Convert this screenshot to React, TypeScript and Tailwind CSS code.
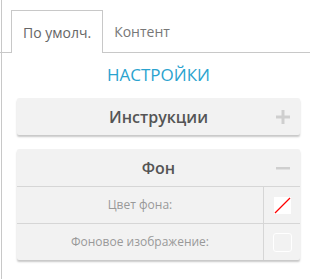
const font = { fontFamily: '"Open Sans", "Noto Sans", sans-serif' };

const Plus = () => (
  <svg width="14" height="14" viewBox="0 0 14 14" className="block">
    <rect x="5.5" y="0" width="3" height="14" fill="#cfcfcf" />
    <rect x="0" y="5.5" width="14" height="3" fill="#cfcfcf" />
  </svg>
);

const Minus = () => (
  <svg width="14" height="14" viewBox="0 0 14 14" className="block">
    <rect x="0" y="6" width="14" height="2.5" fill="#cfcfcf" />
  </svg>
);

const PanelHeader = ({ title, open }: { title: string; open: boolean }) => (
  <div className="relative h-[37px] flex items-center justify-center">
    <span className="text-[16px] font-semibold text-[#555]">{title}</span>
    <span className="absolute right-[10px] top-1/2 -translate-y-1/2">
      {open ? <Minus /> : <Plus />}
    </span>
  </div>
);

const Row = ({ label, children }: { label: string; children: React.ReactNode }) => (
  <div className="flex h-[37px] border-t border-[#d6d6d6]">
    <div className="flex-1 flex items-center justify-center text-[12px] text-[#999]">{label}</div>
    <div className="w-[37px] border-l border-[#d6d6d6] flex items-center justify-center">{children}</div>
  </div>
);

export default function App() {
  return (
    <div className="h-[279px] w-[322px] bg-white overflow-hidden" style={font}>
      <div className="relative w-[310px] h-full">
        <div className="absolute left-px top-0 bottom-0 w-px bg-[#c8c8c8]" />
        {/* tabs */}
        <div className="flex h-[53px] pt-[10px] pl-[11px] border-b border-[#c8c8c8]">
          <div className="h-[43px] -mb-px border border-b-0 border-[#c8c8c8] bg-white px-[11px] flex items-center text-[14px] text-[#666] relative">
            По умолч.
          </div>
          <div className="h-[43px] px-[11px] flex items-center text-[14px] text-[#777]">Контент</div>
        </div>

        <div className="pl-[17px] pr-[10px]">
          <div className="text-center text-[17px] text-[#2aa3cf] pt-[11px] leading-[22px]">НАСТРОЙКИ</div>

          <div className="mt-[12px] bg-[#f2f2f2] rounded-[2px] shadow-[0_2px_2px_rgba(0,0,0,0.22)]">
            <PanelHeader title="Инструкции" open={false} />
          </div>

          <div className="mt-[14px] bg-[#f2f2f2] rounded-[2px] shadow-[0_2px_2px_rgba(0,0,0,0.22)]">
            <PanelHeader title="Фон" open={true} />
            <Row label="Цвет фона:">
              <svg width="17" height="17" viewBox="0 0 17 17" className="block">
                <rect width="17" height="17" fill="#fff" />
                <line x1="1" y1="16" x2="16" y2="1" stroke="#ff0000" strokeWidth="1.2" />
              </svg>
            </Row>
            <Row label="Фоновое изображение:">
              <div className="w-[19px] h-[19px] rounded-[3px] border border-white" />
            </Row>
          </div>
        </div>
      </div>
    </div>
  );
}
